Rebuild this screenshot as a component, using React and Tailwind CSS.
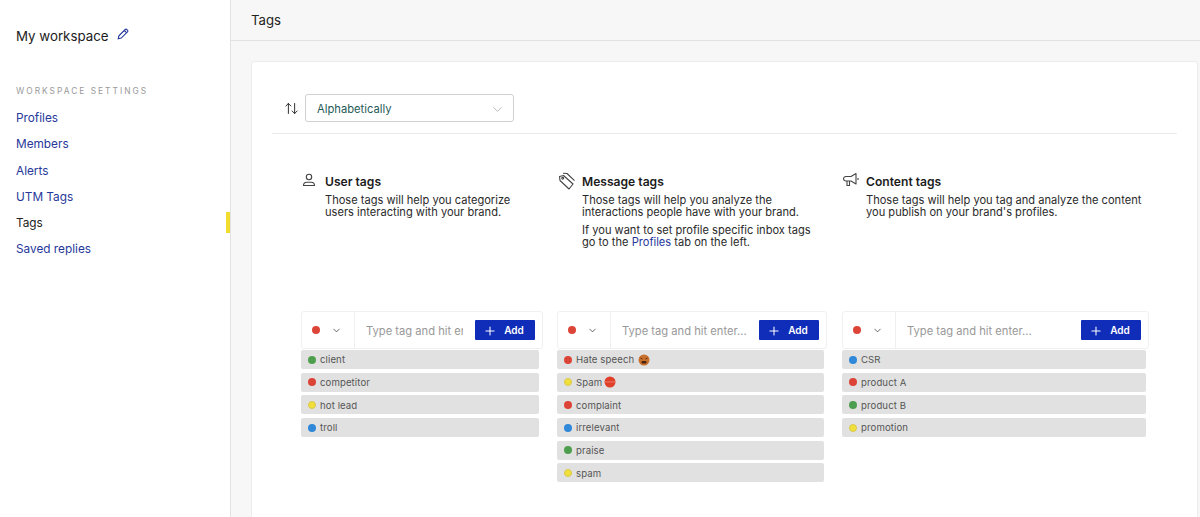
import React from "react";
import { ArrowUpDown, ChevronDown, Plus } from "lucide-react";

const DOT = {
  red: "bg-[#dc4437]",
  green: "bg-[#4d9f4f]",
  yellow: "bg-[#f1e03c] border border-[#d8c84a]",
  blue: "bg-[#2f88d8]",
};

function AngryFace() {
  return (
    <svg width="12" height="12" viewBox="0 0 12 12" className="ml-[4px]">
      <circle cx="6" cy="6" r="5.5" fill="#c8702c" />
      <path d="M2.5 4l2 1M9.5 4l-2 1" stroke="#5a2c12" strokeWidth="1" />
      <rect x="3.5" y="7" width="5" height="2.5" rx="1" fill="#4a240f" />
    </svg>
  );
}

function StopSign() {
  return (
    <svg width="12" height="12" viewBox="0 0 12 12" className="ml-[2px]">
      <circle cx="6" cy="6" r="5.5" fill="#e0402a" />
      <rect x="0.800" y="5.300" width="10.400" height="1.200" fill="#ea6f5a" />
    </svg>
  );
}

function PencilIcon() {
  return (
    <svg width="12" height="12" viewBox="0 0 12 12" fill="none" stroke="#26389a" strokeWidth="1.1" className="mt-[-4px] ml-[8px]">
      <path d="M1.2 10.8l.7-3L8.2 1.5a1.1 1.1 0 011.6 0l.7.7a1.1 1.1 0 010 1.6L4.200 10.100z" />
      <path d="M7.300 2.500l2.200 2.200" />
    </svg>
  );
}

function UserIcon() {
  return (
    <svg width="14" height="14" viewBox="0 0 14 14" fill="none" stroke="#444" strokeWidth="1.1" className="mt-[1px]">
      <circle cx="7" cy="4" r="2.7" />
      <path d="M1.500 12.500c0-2.200 1.500-3.300 3.300-3.300h4.400c1.800 0 3.300 1.100 3.300 3.300z" />
    </svg>
  );
}

function TagIcon() {
  return (
    <svg width="18" height="18" viewBox="0 0 18 18" fill="none" stroke="#444" strokeWidth="1.1" strokeLinejoin="round">
      <path d="M1.500 4.500l4-1 9.500 8.500-4 5-9-8.500z" />
      <circle cx="4.700" cy="6.300" r="0.9" />
      <path d="M5 1.200l4 .3 7.500 7.200" />
    </svg>
  );
}

function MegaphoneIcon() {
  return (
    <svg width="18" height="16" viewBox="0 0 18 16" fill="none" stroke="#444" strokeWidth="1.1" strokeLinejoin="round">
      <path d="M4 4.500h5l5-3v10.500l-5-3H4a2.500 2.500 0 01-2.500-2.200A2.400 2.400 0 014 4.500z" />
      <path d="M5 9v4.500h2.500V9" />
      <path d="M16 6v2" />
    </svg>
  );
}

function TagRow({ color, label, icon }) {
  return (
    <div className="mb-[3.7px] flex h-[19px] items-center rounded-[2px] bg-[#e1e1e1] pl-[7px]">
      <span className={`h-[8px] w-[8px] rounded-full ${DOT[color]}`} />
      <span className="ml-[4px] pt-[2px] text-[9.6px] tracking-[0.1px] text-[#555]">{label}</span>
      {icon}
    </div>
  );
}

function TagColumn({ width, rowsWidth, tags }) {
  return (
    <div style={{ width }} className="shrink-0">
      <div className="flex h-[38px] items-center rounded-[3px] border border-[#f0f0f0] bg-white">
        <div className="flex h-full w-[53px] shrink-0 items-center border-r border-[#efefef] pl-[10px]">
          <span className={`h-[8px] w-[8px] rounded-full ${DOT.red}`} />
          <ChevronDown size={11} strokeWidth={1.6} className="ml-[11px] text-[#333]" />
        </div>
        <input
          placeholder="Type tag and hit enter..."
          className="h-full min-w-0 flex-1 bg-transparent pt-[1px] pl-[11px] text-[11.2px] outline-none placeholder:text-[#999]"
        />
        <button className="mr-[7px] ml-[12px] flex h-[20px] w-[60px] shrink-0 items-center justify-center rounded-[1px] bg-[#0f2db8] pt-[1px] text-[10px] font-semibold text-white">
          <Plus size={14} strokeWidth={1.8} className="mr-[7px] ml-[-3px]" />
          Add
        </button>
      </div>
      <div style={{ width: rowsWidth }} className="mt-[1px]">
        {tags.map((t) => (
          <TagRow key={t.label} {...t} />
        ))}
      </div>
    </div>
  );
}

function InfoColumn({ width, iconWidth, icon, title, children }) {
  return (
    <div style={{ width }} className="flex shrink-0">
      <div style={{ width: iconWidth }} className="-mt-[2px] shrink-0">{icon}</div>
      <div>
        <h3 className="text-[12.1px] leading-[16px] font-semibold text-[#1c1c1c]">{title}</h3>
        <div className="mt-[4px] text-[11.1px] leading-[12px] text-[#2a2a2a]">{children}</div>
      </div>
    </div>
  );
}

const userTags = [
  { color: "green", label: "client" },
  { color: "red", label: "competitor" },
  { color: "yellow", label: "hot lead" },
  { color: "blue", label: "troll" },
];

const messageTags = [
  { color: "red", label: "Hate speech", icon: <AngryFace /> },
  { color: "yellow", label: "Spam", icon: <StopSign /> },
  { color: "red", label: "complaint" },
  { color: "blue", label: "irrelevant" },
  { color: "green", label: "praise" },
  { color: "yellow", label: "spam" },
];

const contentTags = [
  { color: "blue", label: "CSR" },
  { color: "red", label: "product A" },
  { color: "green", label: "product B" },
  { color: "yellow", label: "promotion" },
];

const navItems = ["Profiles", "Members", "Alerts", "UTM Tags", "Tags", "Saved replies"];

export default function App() {
  return (
    <div className="flex h-[517px] w-[1200px] overflow-hidden bg-[#f7f7f7] font-['Inter',sans-serif]">
      {/* sidebar */}
      <aside className="w-[231px] shrink-0 border-r border-[#e2e2e2] bg-white">
        <div className="flex items-center pt-[27px] pl-4">
          <span className="text-[13.3px] leading-[18px] text-[#1c1c1c]">My workspace</span>
          <PencilIcon />
        </div>
        <div className="mt-[41px] pl-4 text-[8.4px] leading-[10px] tracking-[2px] text-[#999]">WORKSPACE SETTINGS</div>
        <nav className="mt-[10px]">
          {navItems.map((item) => (
            <div key={item} className="relative flex h-[26.2px] items-center pl-4">
              <span className={`text-[11.8px] ${item === "Tags" ? "text-[#222]" : "text-[#26389a]"}`}>{item}</span>
              {item === "Tags" && <span className="absolute top-[1px] right-0 h-[21px] w-[4px] bg-[#f2dc2e]" />}
            </div>
          ))}
        </nav>
      </aside>

      <main className="min-w-0 flex-1">
        <header className="flex h-[41px] items-center border-b border-[#e2e2e2] pt-[1px] pl-[20px] text-[13.2px] text-[#222]">Tags</header>
        <div className="pt-[20px] pr-[2px] pl-[20px]">
          <section className="h-[460px] rounded-[3px] border border-[#ececec] bg-white">
            <div className="mx-5 flex h-[72px] items-end border-b border-[#ececec] pb-[11px] pl-[12px]">
              <ArrowUpDown size={15} strokeWidth={1.5} className="mb-[6px] text-[#222]" />
              <div className="ml-[6px] flex h-[28px] w-[209px] items-center justify-between rounded-[3px] border border-[#d0d0d0] pt-[2px] pr-[8px] pl-[11px] text-[11.2px] text-[#1f5a57]">
                Alphabetically
                <ChevronDown size={15} strokeWidth={1.3} className="text-[#aaa]" />
              </div>
            </div>

            <div className="mt-[40px] flex h-[137px] pl-[50px]">
              <InfoColumn width={256} iconWidth={23} icon={<UserIcon />} title="User tags">
                Those tags will help you categorize
                <br />
                users interacting with your brand.
              </InfoColumn>
              <InfoColumn width={284} iconWidth={24} icon={<TagIcon />} title="Message tags">
                Those tags will help you analyze the
                <br />
                interactions people have with your brand.
                <p className="mt-[6px]">
                  If you want to set profile specific inbox tags
                  <br />
                  go to the <span className="text-[#26389a]">Profiles</span> tab on the left.
                </p>
              </InfoColumn>
              <InfoColumn width={320} iconWidth={24} icon={<MegaphoneIcon />} title="Content tags">
                Those tags will help you tag and analyze the content
                <br />
                you publish on your brand's profiles.
              </InfoColumn>
            </div>

            <div className="flex pl-[49px]">
              <div className="w-[256px]">
                <TagColumn width={242} rowsWidth={238} tags={userTags} />
              </div>
              <div className="w-[285px]">
                <TagColumn width={270} rowsWidth={267} tags={messageTags} />
              </div>
              <TagColumn width={307} rowsWidth={304} tags={contentTags} />
            </div>
          </section>
        </div>
      </main>
    </div>
  );
}
